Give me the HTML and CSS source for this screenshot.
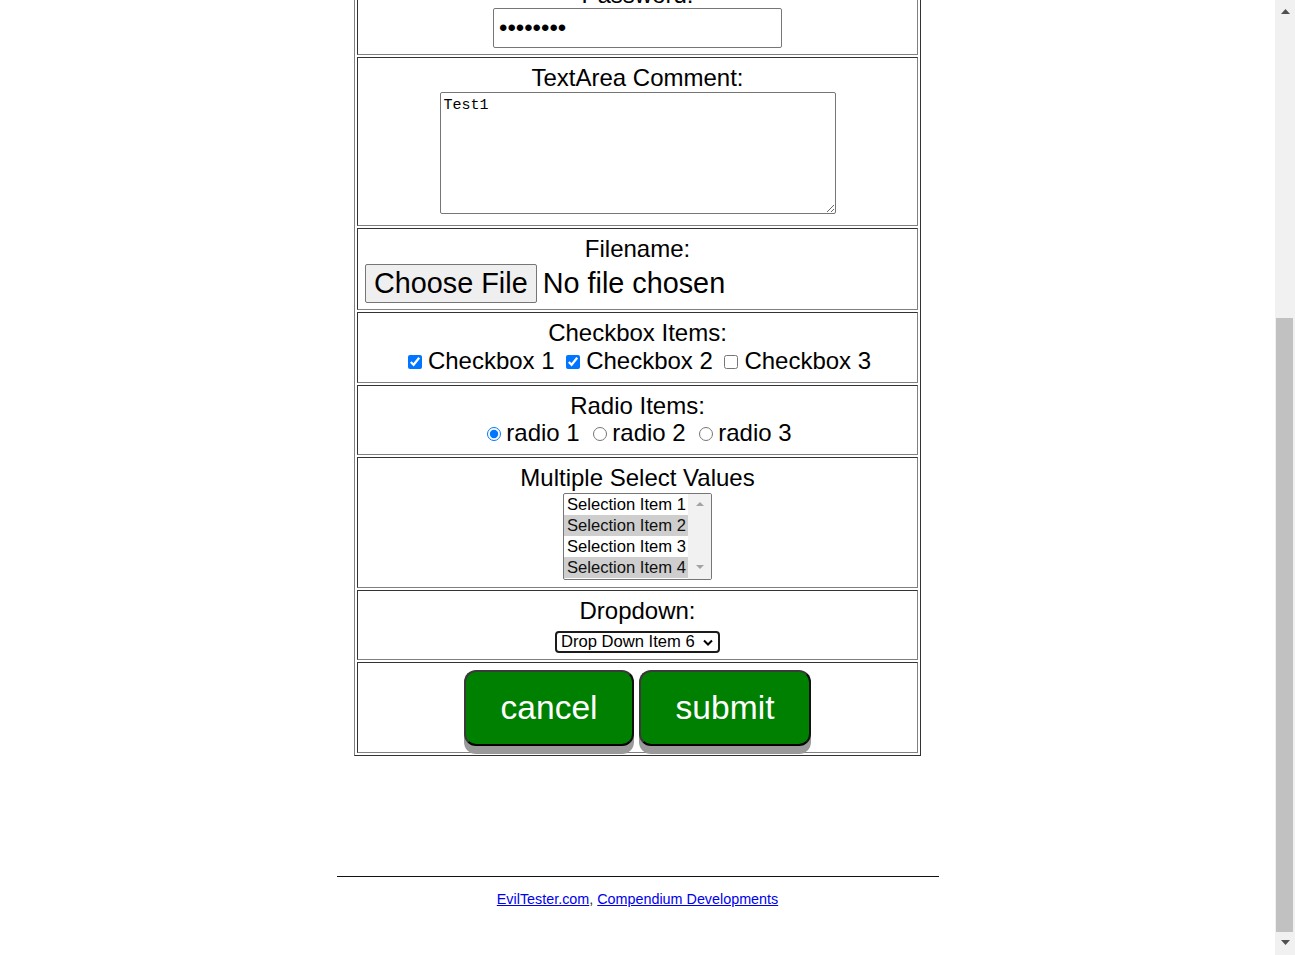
FILE: index.html
```html
<!DOCTYPE html>
<html lang="en">
<head>
<meta charset="utf-8">
<title>Basic HTML Form Example</title>
<link rel="stylesheet" href="styles.css">
</head>
<body>
<div class="page">
  <main class="main">
    <form class="form-table" onsubmit="return false">
      <div class="cell cell-password">
        <div class="label">Password:</div>
        <input class="password" type="password" value="password">
      </div>
      <div class="cell cell-textarea">
        <div class="label">TextArea Comment:</div>
        <textarea class="comment">Test1</textarea>
      </div>
      <div class="cell cell-file">
        <div class="label">Filename:</div>
        <div class="file-row"><span class="file-btn">Choose File</span><span class="file-name">No file chosen</span></div>
      </div>
      <div class="cell cell-check">
        <div class="label">Checkbox Items:</div>
        <div class="opt-row"><label class="opt"><input type="checkbox" checked>Checkbox 1</label><label class="opt"><input type="checkbox" checked>Checkbox 2</label><label class="opt"><input type="checkbox">Checkbox 3</label></div>
      </div>
      <div class="cell cell-radio">
        <div class="label">Radio Items:</div>
        <div class="opt-row radio-row"><label class="opt"><input type="radio" name="radioval" checked>radio 1</label><label class="opt"><input type="radio" name="radioval">radio 2</label><label class="opt"><input type="radio" name="radioval">radio 3</label></div>
      </div>
      <div class="cell cell-multi">
        <div class="label">Multiple Select Values</div>
        <div class="listbox">
          <div class="lb-options">
            <div class="lb-opt">Selection Item 1</div>
            <div class="lb-opt sel">Selection Item 2</div>
            <div class="lb-opt">Selection Item 3</div>
            <div class="lb-opt sel">Selection Item 4</div>
          </div>
          <div class="lb-scroll">
            <svg class="lb-arrow" width="8" height="4" viewBox="0 0 8 4"><polygon points="0,4 4,0 8,4"/></svg>
            <svg class="lb-arrow" width="8" height="4" viewBox="0 0 8 4"><polygon points="0,0 8,0 4,4"/></svg>
          </div>
        </div>
      </div>
      <div class="cell cell-drop">
        <div class="label">Dropdown:</div>
        <div class="dropdown"><span class="dd-text">Drop Down Item 6</span><svg class="dd-chev" width="10" height="7" viewBox="0 0 10 7"><polyline points="1,1.5 5,5.5 9,1.5"/></svg></div>
      </div>
      <div class="cell cell-buttons">
        <div class="btn-row"><button class="styled-click-button" type="button">cancel</button><button class="styled-click-button" type="button">submit</button></div>
      </div>
    </form>
    <footer class="footer">
      <div class="rule"></div>
      <p class="credits"><a href="#">EvilTester.com</a>, <a href="#">Compendium Developments</a></p>
    </footer>
  </main>
  <div class="scrollbar">
    <div class="sb-btn sb-up"><svg width="9" height="5" viewBox="0 0 9 5"><polygon points="0,5 4.5,0 9,5"/></svg></div>
    <div class="sb-track"><div class="sb-thumb"></div></div>
    <div class="sb-btn sb-down"><svg width="9" height="5" viewBox="0 0 9 5"><polygon points="0,0 9,0 4.5,5"/></svg></div>
  </div>
</div>
</body>
</html>
```
FILE: styles.css
```css
html, body {
  margin: 0;
  padding: 0;
  height: 955px;
  overflow: hidden;
  background: #fff;
}

body {
  font-family: "Liberation Sans", Arial, sans-serif;
  color: #000;
}

.page {
  display: flex;
  height: 955px;
}

.main {
  flex: 1;
  overflow: hidden;
  display: flex;
  flex-direction: column;
  align-items: center;
}

/* table-like form */
.form-table {
  margin: -29px 0 0;
  width: 567px;
  box-sizing: border-box;
  padding: 2px;
  display: flex;
  flex-direction: column;
  gap: 2px;
  border: 1px solid;
  border-color: #808080 #333 #333 #808080;
}

.cell {
  box-sizing: border-box;
  border: 1px solid;
  border-color: #333 #808080 #808080 #333;
  padding: 6px 1px 0;
  display: flex;
  flex-direction: column;
  align-items: center;
}

.cell-password { height: 81px; }
.cell-textarea { height: 169px; }
.cell-file { height: 82px; }
.cell-check { height: 71px; }
.cell-radio { height: 70px; }
.cell-multi { height: 131px; }
.cell-drop { height: 70px; }
.cell-buttons { height: 91px; padding-top: 7px; }

.label {
  font-size: 24px;
  line-height: 27px;
  white-space: nowrap;
}

/* password */
.password {
  box-sizing: border-box;
  width: 289px;
  height: 40px;
  margin: 0;
  padding: 0 5px;
  border: 1px solid #767676;
  border-radius: 2px;
  font-family: "Liberation Sans", Arial, sans-serif;
  font-size: 24px;
  color: #000;
  background: #fff;
}

/* textarea */
.comment {
  box-sizing: border-box;
  width: 396px;
  height: 122px;
  margin: 1px 0 0;
  padding: 4px 3px 2px;
  border: 1px solid #767676;
  border-radius: 2px;
  font-family: "Liberation Mono", monospace;
  font-size: 15px;
  color: #000;
  background: #fff;
}

/* file */
.file-row {
  align-self: flex-start;
  margin: 2px 0 0 6px;
  display: flex;
  align-items: center;
  font-size: 28.8px;
}

.file-btn {
  box-sizing: border-box;
  height: 39px;
  line-height: 37px;
  padding: 0 8px;
  border: 1px solid #767676;
  border-radius: 2px;
  background: #efefef;
  color: #000;
  white-space: nowrap;
}

.file-name {
  margin-left: 6px;
  white-space: nowrap;
}

/* checkbox / radio */
.opt-row {
  margin-top: 1px;
  padding-left: 4px;
  font-size: 24px;
  line-height: 27px;
  white-space: nowrap;
  text-align: center;
}

.radio-row {
  margin-top: 0;
}

.opt input[type="checkbox"] {
  width: 14px;
  height: 14px;
  margin: 3px 6px 5px 0;
}

.opt + .opt {
  margin-left: 11.5px;
}

.opt input[type="radio"] {
  width: 14px;
  height: 14px;
  margin: 3px 5px 1px 0;
}

.radio-row .opt + .opt {
  margin-left: 13.6px;
}

/* multi select listbox */
.listbox {
  box-sizing: border-box;
  margin-top: 2px;
  width: 149px;
  height: 87px;
  border: 1px solid #767676;
  border-radius: 2px;
  display: flex;
  overflow: hidden;
  background: #fff;
}

.lb-options {
  width: 124px;
  font-size: 16.6px;
  line-height: 21px;
}

.lb-opt {
  padding-left: 3px;
  white-space: nowrap;
  color: #000;
}

.lb-opt.sel {
  background: #cecece;
  color: #101010;
}

.lb-scroll {
  flex: 1;
  background: #f1f1f1;
  display: flex;
  flex-direction: column;
  align-items: center;
  justify-content: space-between;
  padding: 8px 0 10px;
}

.lb-arrow {
  display: block;
  fill: #a3a3a3;
}

/* dropdown */
.dropdown {
  box-sizing: border-box;
  margin-top: 7px;
  width: 165px;
  height: 22px;
  border: 2px solid #1b1b1b;
  border-radius: 4px;
  padding: 0 5px 0 4px;
  display: flex;
  align-items: center;
  justify-content: space-between;
  font-size: 16.6px;
  background: #fff;
}

.dd-text {
  white-space: nowrap;
}

.dd-chev {
  display: block;
  fill: none;
  stroke: #000;
  stroke-width: 2;
}

/* buttons */
.btn-row {
  display: flex;
  gap: 5px;
}

.styled-click-button {
  margin: 0;
  padding: 17px 34.5px;
  font-family: "Liberation Sans", Arial, sans-serif;
  font-size: 33.6px;
  line-height: 38px;
  color: #fff;
  background: #008000;
  border: 2px solid #3a3a3a;
  border-bottom-color: #000;
  border-right-color: #111;
  border-radius: 12px;
  box-shadow: 0 8px 0 #9a9a9a;
  cursor: pointer;
}

/* footer */
.footer {
  margin-top: 120px;
  width: 602px;
}

.rule {
  height: 0;
  border-top: 1px solid #111;
}

.credits {
  margin: 14px 0 0;
  font-size: 14.35px;
  line-height: 16px;
  text-align: center;
  color: #333;
}

.credits a {
  color: #0000ee;
  text-decoration: underline;
}

/* scrollbar */
.scrollbar {
  width: 20px;
  flex: none;
  background: #f1f1f1;
  display: flex;
  flex-direction: column;
}

.sb-btn {
  box-sizing: border-box;
  display: flex;
  justify-content: center;
  fill: #505050;
}

.sb-btn svg {
  display: block;
}

.sb-up {
  height: 17px;
  padding-top: 9px;
}

.sb-track {
  flex: 1;
  padding-top: 301px;
}

.sb-thumb {
  margin-left: 1px;
  width: 17px;
  height: 614px;
  background: #c1c1c1;
}

.sb-down {
  height: 20px;
  padding-top: 5px;
}
```
